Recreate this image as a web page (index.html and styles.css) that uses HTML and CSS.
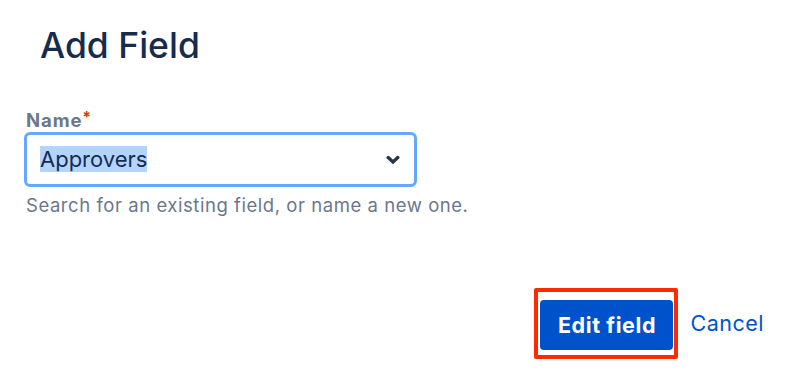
FILE: index.html
```html
<!DOCTYPE html>
<html>
<head>
<meta charset="utf-8">
<link rel="stylesheet" href="styles.css">
</head>
<body>
<div class="dialog">
  <h1 class="title">Add Field</h1>
  <div class="form">
    <label class="label">Name<span class="req">*</span></label>
    <div class="select">
      <span class="value"><span class="sel">Approvers</span></span>
      <svg class="chev" width="14" height="10" viewBox="0 0 14 10"><polyline points="2.2,2.6 7,7 11.8,2.6" fill="none" stroke="#2a3442" stroke-width="3.4" stroke-linecap="round" stroke-linejoin="miter"/></svg>
    </div>
    <div class="help">Search for an existing field, or name a new one.</div>
  </div>
  <div class="footer">
    <span class="highlight"><button class="primary">Edit field</button></span>
    <a class="cancel">Cancel</a>
  </div>
</div>
</body>
</html>
```
FILE: styles.css
```css
html, body {
  margin: 0;
  padding: 0;
  background: #ffffff;
}
body {
  font-family: Inter, "Liberation Sans", sans-serif;
  width: 808px;
  height: 384px;
  overflow: hidden;
}
.dialog {
  padding-top: 26px;
}
.title {
  margin: 0 0 40px 40px;
  font-size: 35.5px;
  line-height: 40px;
  font-weight: 500;
  color: #172B4D;
}
.form {
  margin-left: 24px;
  display: flex;
  flex-direction: column;
  align-items: flex-start;
}
.label {
  margin-left: 2px;
  font-size: 18.5px;
  line-height: 22px;
  font-weight: 700;
  letter-spacing: 0.9px;
  color: #6B778C;
}
.req {
  color: #DE350B;
  font-size: 16px;
  vertical-align: 4px;
  margin-left: 0;
}
.select {
  margin-top: 1px;
  box-sizing: border-box;
  width: 393px;
  height: 55px;
  border: 3px solid #66A8FF;
  border-radius: 6px;
  display: flex;
  align-items: center;
  padding: 0 14px 0 13px;
}
.value {
  flex: 1;
  font-size: 22px;
  line-height: 49px;
  color: #172B4D;
}
.sel {
  background: #B3D4FF;
}
.chev {
  display: block;
}
.help {
  margin: 7px 0 0 2px;
  font-size: 18.5px;
  line-height: 22px;
  color: #6B778C;
  letter-spacing: 0.55px;
}
.footer {
  margin-top: 72px;
  display: flex;
  justify-content: flex-end;
  align-items: center;
  padding-right: 44px;
}
.highlight {
  display: block;
  border: 4px solid #FF2A00;
  border-radius: 2px;
  padding: 8px 1px 5px 2px;
}
.primary {
  display: block;
  width: 133px;
  height: 50px;
  border: 0;
  border-radius: 4px;
  background: #0052CC;
  color: #ffffff;
  font-family: Inter, "Liberation Sans", sans-serif;
  font-size: 21.5px;
  font-weight: 700;
  letter-spacing: 0.6px;
  line-height: 50px;
  padding: 0;
}
.cancel {
  margin-left: 12px;
  margin-top: -2px;
  font-size: 21.5px;
  letter-spacing: 0.5px;
  line-height: 50px;
  color: #0052CC;
}
```
